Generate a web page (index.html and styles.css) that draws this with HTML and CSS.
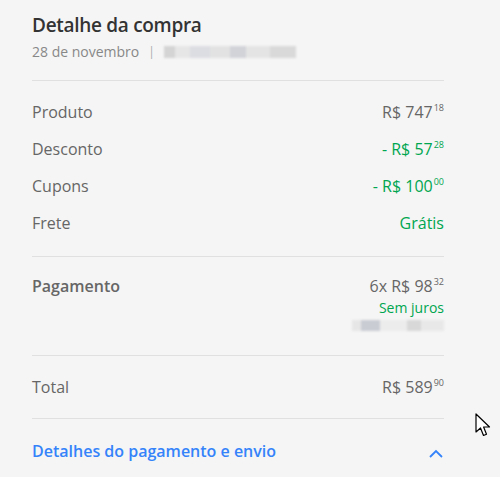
FILE: index.html
```html
<!DOCTYPE html>
<html lang="pt-BR">
<head>
    <meta charset="UTF-8">
    <meta name="viewport" content="width=device-width, initial-scale=1.0">
    <title>Detalhe da compra</title>
    <link rel="stylesheet" href="styles.css">
</head>
<body>
    <div class="purchase">
        <div class="purchase-header">
            <h1 class="purchase-title">Detalhe da compra</h1>
            <div class="purchase-meta">
                <span>28 de novembro</span>
                <span class="meta-sep">|</span>
                <span class="blur blur-id"></span>
            </div>
        </div>

        <div class="section">
            <div class="row">
                <span class="label">Produto</span>
                <span class="amount">R$ 747<sup>18</sup></span>
            </div>
            <div class="row">
                <span class="label">Desconto</span>
                <span class="amount green">- R$ 57<sup>28</sup></span>
            </div>
            <div class="row">
                <span class="label">Cupons</span>
                <span class="amount green">- R$ 100<sup>00</sup></span>
            </div>
            <div class="row">
                <span class="label">Frete</span>
                <span class="amount green">Grátis</span>
            </div>
        </div>

        <div class="section section-pay">
            <div class="row row-top">
                <span class="label strong">Pagamento</span>
                <div class="pay-info">
                    <span class="amount">6x R$ 98<sup>32</sup></span>
                    <span class="no-interest">Sem juros</span>
                    <span class="blur blur-card"></span>
                </div>
            </div>
        </div>

        <div class="section section-total">
            <div class="row">
                <span class="label">Total</span>
                <span class="amount">R$ 589<sup>90</sup></span>
            </div>
        </div>

        <div class="details-toggle">
            <span>Detalhes do pagamento e envio</span>
            <svg class="chevron" width="14" height="9" viewBox="0 0 14 9">
                <path d="M1 8 L7 2 L13 8" fill="none" stroke="#3483fa" stroke-width="1.8"/>
            </svg>
        </div>
    </div>

    <svg class="cursor" width="17" height="25" viewBox="0 0 17 25">
        <path d="M1 1 L1 19 L5.5 15 L8.5 22.5 L11.5 21.2 L8.6 14 L14.5 14 Z" fill="#fff" stroke="#000" stroke-width="1.2" stroke-linejoin="round"/>
    </svg>
</body>
</html>
```

FILE: styles.css
```css
* {
    margin: 0;
    padding: 0;
    box-sizing: border-box;
}

body {
    background: #f5f5f5;
    font-family: 'Open Sans', 'Liberation Sans', sans-serif;
    color: #666;
    width: 500px;
    height: 477px;
    overflow: hidden;
}

.purchase {
    width: 444px;
    padding: 13px 0 0 32px;
}

.purchase-header {
    padding-bottom: 20px;
    border-bottom: 1px solid #e0e0e0;
}

.purchase-title {
    font-size: 19px;
    font-weight: 600;
    color: #333;
    line-height: 24px;
    letter-spacing: -0.3px;
}

.purchase-meta {
    display: flex;
    align-items: center;
    gap: 9px;
    margin-top: 7px;
    font-size: 14px;
    line-height: 16px;
    color: #888;
}

.meta-sep {
    color: #aaa;
    font-size: 12px;
}

.blur {
    display: block;
    background: linear-gradient(90deg, #d4d4d4 0 8%, #e6e6e6 8% 20%, #dcdde2 20% 35%, #e2e2e2 35% 50%, #d2d3d8 50% 62%, #e4e4e4 62% 80%, #d9d9d9 80% 100%);
    filter: blur(1px);
}

.blur-id {
    width: 132px;
    height: 12px;
}

.section {
    border-bottom: 1px solid #e0e0e0;
    padding: 21px 0 23px;
    display: flex;
    flex-direction: column;
    gap: 17px;
}

.section-pay {
    padding-top: 19px;
    padding-bottom: 24px;
}

.section-total {
    padding-bottom: 21px;
}

.row {
    display: flex;
    justify-content: space-between;
    align-items: center;
    font-size: 16px;
    line-height: 20px;
}

.row-top {
    align-items: flex-start;
}

.label.strong {
    font-weight: 600;
}

.amount {
    color: #666;
}

.amount sup {
    font-size: 9px;
    vertical-align: top;
    line-height: 12px;
    margin-left: 1px;
}

.green {
    color: #00a650;
}

.pay-info {
    display: flex;
    flex-direction: column;
    align-items: flex-end;
}

.no-interest {
    color: #00a650;
    font-size: 14px;
    line-height: 17px;
    margin-top: 3px;
}

.blur-card {
    width: 92px;
    height: 11px;
    margin-top: 4px;
    background: linear-gradient(90deg, #e6e6e6 0 10%, #c9ccd3 10% 30%, #ececec 30% 60%, #d8d8d8 60% 75%, #e8e8e8 75% 100%);
}

.details-toggle {
    display: flex;
    justify-content: space-between;
    align-items: center;
    padding-top: 22px;
    font-size: 16px;
    font-weight: 600;
    color: #3483fa;
    line-height: 20px;
}

.chevron {
    margin-right: 1px;
    margin-top: 4px;
}

.cursor {
    position: absolute;
    left: 475px;
    top: 413px;
}
```
